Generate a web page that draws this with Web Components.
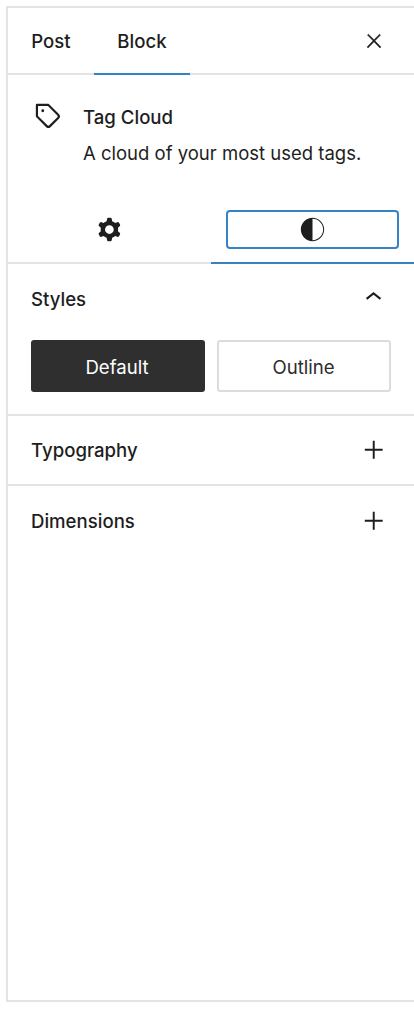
<!DOCTYPE html>
<html lang="en">
<head>
<meta charset="utf-8">
<title>Tag Cloud settings</title>
<style>
  html, body { margin: 0; background: #fff; }
  body { font-family: Inter, "Liberation Sans", sans-serif; color: #1e1e1e; overflow: hidden; }
</style>
</head>
<body>
<settings-sidebar>
  <sidebar-header slot="header"></sidebar-header>
  <block-card slot="card" name="Tag Cloud" description="A cloud of your most used tags."></block-card>
  <inspector-tabs slot="tabs"></inspector-tabs>
  <style-panel slot="panels"></style-panel>
  <collapsed-panel slot="panels" label="Typography"></collapsed-panel>
  <collapsed-panel slot="panels" label="Dimensions"></collapsed-panel>
</settings-sidebar>

<script>
const ICONS = {
  close: '<path stroke="currentColor" stroke-width=".6" d="M13 11.8l6.1-6.3-1-1-6.1 6.2-6.1-6.2-1 1 6.1 6.3-6.5 6.7 1 1 6.5-6.6 6.5 6.6 1-1z"/>',
  tag: '<path fill-rule="evenodd" d="M4.75 4a.75.75 0 0 0-.75.75v7.826c0 .2.08.39.22.53l6.72 6.716a2.313 2.313 0 0 0 3.276-.001l5.61-5.611-.531-.53.532.528a2.315 2.315 0 0 0 0-3.264L13.104 4.22a.75.75 0 0 0-.53-.22H4.75ZM19 12.576a.815.815 0 0 1-.236.574l-5.61 5.611a.814.814 0 0 1-1.153 0L5.5 12.264V5.5h6.763l6.5 6.502a.816.816 0 0 1 .237.574ZM8.75 9.75a1 1 0 1 0 0-2 1 1 0 0 0 0 2Z"/>',
  cog: '<path fill-rule="evenodd" d="M10.289 4.836A1 1 0 0111.275 4h1.306a1 1 0 01.987.836l.244 1.466c.787.26 1.503.679 2.108 1.218l1.393-.522a1 1 0 011.216.437l.653 1.13a1 1 0 01-.23 1.273l-1.148.944a6.025 6.025 0 010 2.435l1.149.946a1 1 0 01.23 1.272l-.653 1.13a1 1 0 01-1.216.437l-1.394-.522c-.605.54-1.32.958-2.108 1.218l-.244 1.466a1 1 0 01-.987.836h-1.306a1 1 0 01-.986-.836l-.244-1.466a5.995 5.995 0 01-2.108-1.218l-1.394.522a1 1 0 01-1.217-.436l-.653-1.131a1 1 0 01.23-1.272l1.149-.946a6.026 6.026 0 010-2.435l-1.148-.944a1 1 0 01-.23-1.272l.653-1.131a1 1 0 011.217-.437l1.393.522a5.994 5.994 0 012.108-1.218l.244-1.466zM14.929 12a3 3 0 11-6 0 3 3 0 016 0z"/>',
  styles: '<path fill-rule="evenodd" d="M12 4c-4.4 0-8 3.6-8 8s3.6 8 8 8 8-3.6 8-8-3.6-8-8-8zm0 15.3V4.7c4 0 7.3 3.3 7.3 7.3S16 19.3 12 19.3z"/>',
  chevronUp: '<path d="M6.5 12.4L12 8l5.5 4.4-.9 1.2L12 10l-4.5 3.6-1-1.2z"/>',
  plus: '<path d="M10.85 12.65V20h1.8v-7.35H20v-1.8h-7.35V3.5h-1.8v7.35H3.5v1.8z"/>'
};

class WpIcon extends HTMLElement {
  connectedCallback() {
    const size = this.getAttribute("size") || 35;
    this.attachShadow({ mode: "open" }).innerHTML = `
      <style>
        :host { display: inline-flex; flex: none; }
        svg { display: block; fill: currentColor; }
      </style>
      <svg xmlns="http://www.w3.org/2000/svg" viewBox="0 0 24 24" width="${size}" height="${size}">${ICONS[this.getAttribute("name")]}</svg>`;
  }
}

class SettingsSidebar extends HTMLElement {
  constructor() {
    super();
    this.attachShadow({ mode: "open" }).innerHTML = `
      <style>
        :host {
          display: flex;
          flex-direction: column;
          box-sizing: border-box;
          height: 996px;
          margin: 6px 0 0 6px;
          border: solid #e4e4e4;
          border-width: 2px 0 2px 2px;
          font-size: 18.6px;
          line-height: 26px;
        }
      </style>
      <slot name="header"></slot>
      <slot name="card"></slot>
      <slot name="tabs"></slot>
      <slot name="panels"></slot>`;
  }
}

class SidebarHeader extends HTMLElement {
  constructor() {
    super();
    this.attachShadow({ mode: "open" }).innerHTML = `
      <style>
        :host {
          display: flex;
          align-items: stretch;
          box-sizing: border-box;
          height: 67px;
          border-bottom: 2px solid #e4e4e4;
        }
        .tab {
          display: flex;
          align-items: center;
          justify-content: center;
          box-sizing: border-box;
          height: 67px;
          font-weight: 500;
          border-bottom: 2px solid transparent;
        }
        .post { width: 86px; }
        .block { width: 96px; }
        .tab.active { border-bottom-color: #3582c4; }
        .close { margin-left: auto; margin-right: 29.5px; align-self: center; display: flex; }
      </style>
      <div class="tab post">Post</div>
      <div class="tab block active">Block</div>
      <div class="close"><wp-icon name="close" size="22"></wp-icon></div>`;
  }
}

class BlockCard extends HTMLElement {
  connectedCallback() {
    this.attachShadow({ mode: "open" }).innerHTML = `
      <style>
        :host { display: flex; gap: 18px; padding: 23px 0 0 22px; height: 110px; box-sizing: border-box; }
        .title { font-weight: 500; margin-top: 6px; }
        .desc { margin-top: 10px; font-size: 18.5px; }
      </style>
      <wp-icon name="tag"></wp-icon>
      <div>
        <div class="title">${this.getAttribute("name")}</div>
        <div class="desc">${this.getAttribute("description")}</div>
      </div>`;
  }
}

class InspectorTabs extends HTMLElement {
  constructor() {
    super();
    this.attachShadow({ mode: "open" }).innerHTML = `
      <style>
        :host {
          display: grid;
          grid-template-columns: 1fr 1fr;
          box-sizing: border-box;
          height: 79px;
          border-bottom: 2px solid #e4e4e4;
        }
        .tab { display: flex; align-items: center; justify-content: center; box-sizing: border-box; height: 79px; padding: 25px 15px 13px; border-bottom: 2px solid transparent; }
        .tab.active { border-bottom-color: #3582c4; }
        .focus {
          flex: 1;
          align-self: stretch;
          display: flex;
          align-items: center;
          justify-content: center;
          border: 2px solid #3582c4;
          border-radius: 4px;
        }
      </style>
      <div class="tab"><wp-icon name="cog"></wp-icon></div>
      <div class="tab active"><div class="focus"><wp-icon name="styles"></wp-icon></div></div>`;
  }
}

class StylePanel extends HTMLElement {
  constructor() {
    super();
    this.attachShadow({ mode: "open" }).innerHTML = `
      <style>
        :host { display: block; box-sizing: border-box; height: 152px; padding: 0 23px; border-bottom: 2px solid #e4e4e4; }
        .head { display: flex; align-items: center; justify-content: space-between; height: 70px; margin-bottom: 6px; font-weight: 500; }
        .head wp-icon { margin-right: 1px; margin-top: -4px; }
        .styles { display: grid; grid-template-columns: 1fr 1fr; gap: 12px; }
        .styles div {
          display: flex;
          align-items: center;
          justify-content: center;
          height: 52px;
          box-sizing: border-box;
          padding-top: 2px;
          border-radius: 3px;
        }
        .on { background: #2f2f2f; color: #fff; padding-right: 2px; }
        .off { border: 2px solid #dcdcde; color: #2c2c2c; padding-right: 1px; }
      </style>
      <div class="head"><span>Styles</span><wp-icon name="chevronUp" size="33"></wp-icon></div>
      <div class="styles">
        <div class="on">Default</div>
        <div class="off">Outline</div>
      </div>`;
  }
}

class CollapsedPanel extends HTMLElement {
  connectedCallback() {
    this.attachShadow({ mode: "open" }).innerHTML = `
      <style>
        :host {
          display: flex;
          align-items: center;
          justify-content: space-between;
          box-sizing: border-box;
          height: 70px;
          padding: 0 27.5px 0 23px;
          font-weight: 500;
          border-bottom: 2px solid #e4e4e4;
        }
        :host(:last-child) { border-bottom: 0; }
      </style>
      <span>${this.getAttribute("label")}</span>
      <wp-icon name="plus" size="26"></wp-icon>`;
  }
}

customElements.define("wp-icon", WpIcon);
customElements.define("settings-sidebar", SettingsSidebar);
customElements.define("sidebar-header", SidebarHeader);
customElements.define("block-card", BlockCard);
customElements.define("inspector-tabs", InspectorTabs);
customElements.define("style-panel", StylePanel);
customElements.define("collapsed-panel", CollapsedPanel);
</script>
</body>
</html>
